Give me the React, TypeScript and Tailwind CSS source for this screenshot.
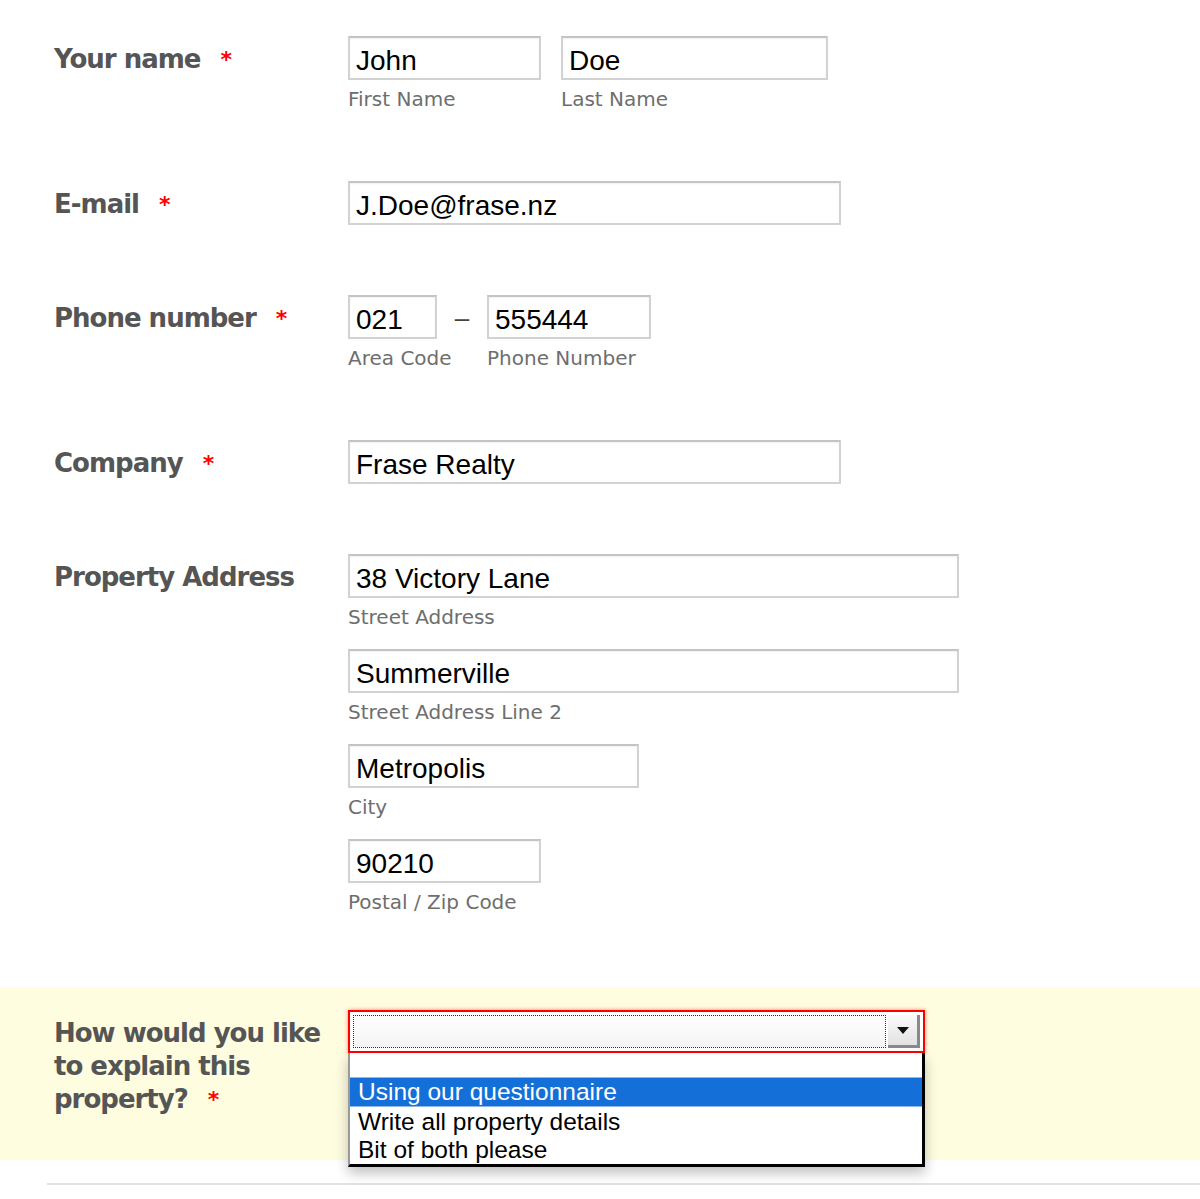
import React from 'react';

const LABEL = "font-['DejaVu_Sans',sans-serif] font-bold text-[26px] leading-[33px] tracking-[-1px] text-[#555555]";
const SUB = "font-['DejaVu_Sans',sans-serif] text-[20px] leading-[26px] text-[#6e6e6e] mt-[6px] whitespace-nowrap";

function Req(): React.ReactElement {
  return <span className="ml-[20px] align-top text-[22px] text-[#ff0000] tracking-normal">*</span>;
}

function Field({ value, width }: { value: string; width: number }): React.ReactElement {
  return (
    <input
      readOnly
      value={value}
      style={{ width }}
      className="block h-[44px] border-2 border-[#d2d2d2] border-t-[#c4c4c4] bg-white pl-[6px] pt-[6px] font-['Liberation_Sans',Arial,sans-serif] text-[28px] text-black shadow-[inset_0_1px_2px_rgba(0,0,0,0.06)] outline-none"
    />
  );
}

function Row({ label, required, children, className }: { label: React.ReactNode; required?: boolean; children: React.ReactNode; className?: string }): React.ReactElement {
  return (
    <div className={`flex ${className ?? ''}`}>
      <div className="w-[348px] shrink-0 pl-[54px] pr-[12px] pt-[7px]">
        <div className={LABEL}>
          {label}
          {required && <Req />}
        </div>
      </div>
      <div className="flex flex-col">{children}</div>
    </div>
  );
}

export default function App(): React.ReactElement {
  return (
    <div className="relative h-[1199px] w-[1200px] overflow-hidden bg-white">
      <div className="pt-[36px]">
        <Row label="Your name" required>
          <div className="flex gap-[20px]">
            <div className="w-[193px]">
              <Field value="John" width={193} />
              <div className={SUB}>First Name</div>
            </div>
            <div className="w-[267px]">
              <Field value="Doe" width={267} />
              <div className={SUB}>Last Name</div>
            </div>
          </div>
        </Row>

        <Row label="E-mail" required className="mt-[69px]">
          <Field value="J.Doe@frase.nz" width={493} />
        </Row>

        <Row label="Phone number" required className="mt-[70px]">
          <div className="flex">
            <div className="w-[89px]">
              <Field value="021" width={89} />
              <div className={SUB}>Area Code</div>
            </div>
            <div className="flex h-[44px] w-[50px] items-center justify-center pt-[2px] font-['Liberation_Sans',Arial,sans-serif] text-[26px] text-[#444444]">
              –
            </div>
            <div className="w-[164px]">
              <Field value="555444" width={164} />
              <div className={SUB}>Phone Number</div>
            </div>
          </div>
        </Row>

        <Row label="Company" required className="mt-[69px]">
          <Field value="Frase Realty" width={493} />
        </Row>

        <Row label="Property Address" className="mt-[70px]">
          <Field value="38 Victory Lane" width={611} />
          <div className={SUB}>Street Address</div>
          <div className="mt-[19px]">
            <Field value="Summerville" width={611} />
          </div>
          <div className={SUB}>Street Address Line 2</div>
          <div className="mt-[19px]">
            <Field value="Metropolis" width={291} />
          </div>
          <div className={SUB}>City</div>
          <div className="mt-[19px]">
            <Field value="90210" width={193} />
          </div>
          <div className={SUB}>Postal / Zip Code</div>
        </Row>
      </div>

      <div className="mt-[72px] h-[173px] bg-[#fffde0] pt-[23px]">
        <Row label={<>How would you like to explain this property?</>} required>
          <div className="relative w-[577px]">
            <div className="flex h-[43px] w-[577px] items-stretch border-2 border-[#ff0000] bg-white p-[3px] shadow-[0_0_4px_rgba(255,0,0,0.5)]">
              <div className="flex-1 border border-dotted border-[#333] bg-[linear-gradient(#ffffff,#f4f4f4)]" />
              <div className="ml-[2px] flex w-[32px] items-center justify-center border-r-[3px] border-b-[3px] border-[#8a8a8a] bg-[linear-gradient(#fafafa,#e2e2e2)]">
                <svg width="14" height="9" viewBox="0 0 14 9">
                  <path d="M1 1h12L7 8z" fill="#111" />
                </svg>
              </div>
            </div>
            <div className="absolute left-0 top-[43px] z-10 w-[577px] border-l-2 border-l-[#9a9a9a] border-r-[3px] border-b-[3px] border-r-black border-b-black bg-white font-['Liberation_Sans',Arial,sans-serif] text-[24.5px] text-black shadow-[0_6px_12px_rgba(0,0,0,0.25)]">
              <div className="h-[24px]" />
              <div className="h-[30px] border-y border-[#8fb8ea] bg-[#1470d8] pl-[8px] leading-[28px] text-white">
                Using our questionnaire
              </div>
              <div className="h-[29px] pl-[8px] leading-[29px]">Write all property details</div>
              <div className="h-[28px] pl-[8px] leading-[28px]">Bit of both please</div>
            </div>
          </div>
        </Row>
      </div>

      <div className="ml-[47px] mt-[23px] h-[2px] bg-[#e2e2e2]" />
    </div>
  );
}
